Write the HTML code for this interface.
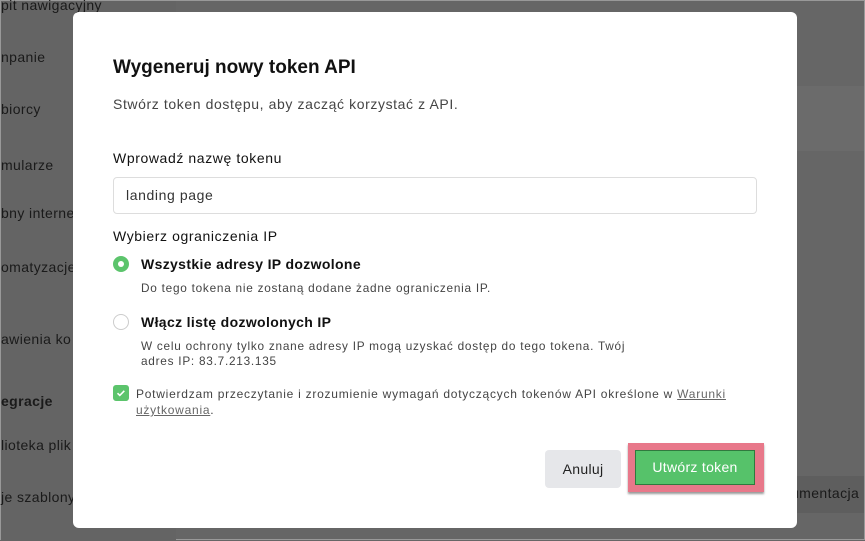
<!DOCTYPE html>
<html><head><meta charset="utf-8"><style>
*{margin:0;padding:0;box-sizing:border-box}
body{width:865px;height:540px;overflow:hidden;background:#666;font-family:"Liberation Sans",sans-serif;position:relative;border:1px solid #999}
.side{position:absolute;left:0;top:0;width:175px;height:540px;background:#646464}
.side div{position:absolute;left:0;font-size:14px;color:#1a1a1a;white-space:nowrap;letter-spacing:0.4px}
.band{position:absolute;left:175px;right:0;background:#6a6a6a}
.modal{position:absolute;left:72px;top:11px;width:724px;height:516px;background:#fff;border-radius:6px}
.abs{position:absolute;white-space:nowrap}
h1{position:absolute;left:40px;top:45px;font-size:19px;font-weight:600;color:#111}
.radio{position:absolute;width:16px;height:16px;border-radius:50%}
.t{letter-spacing:0.6px}
.s{letter-spacing:0.75px}
</style></head><body>
<div class="side">
<div style="top:-4px">pit nawigacyjny</div>
<div style="top:48px">npanie</div>
<div style="top:100px">biorcy</div>
<div style="top:156px">mularze</div>
<div style="top:204px">bny interne</div>
<div style="top:258px">omatyzacje</div>
<div style="top:330px">awienia ko</div>
<div style="top:392px;font-weight:bold">egracje</div>
<div style="top:436px">lioteka plik</div>
<div style="top:488px">je szablony</div>
</div>
<div class="band" style="top:85px;height:65px;background:#6b6b6b"></div>
<div class="band" style="top:475px;height:37px;background:#5e5e5e"></div>
<div class="abs" style="left:790px;top:484px;font-size:14px;color:#1a1a1a;letter-spacing:0.4px">umentacja</div>
<div class="modal">
<h1>Wygeneruj nowy token API</h1>
<div class="abs t" style="left:40px;top:84px;font-size:14px;color:#444">Stwórz token dostępu, aby zacząć korzystać z API.</div>
<div class="abs t" style="left:40px;top:138px;font-size:14px;color:#111">Wprowadź nazwę tokenu</div>
<div class="abs t" style="left:40px;top:165px;width:644px;height:37px;border:1px solid #ddd;border-radius:4px;padding:9px 12px;font-size:14px;color:#333">landing page</div>
<div class="abs t" style="left:40px;top:216px;font-size:14px;color:#111">Wybierz ograniczenia IP</div>
<div class="radio" style="left:40px;top:244px;background:#5cc46c"><div style="position:absolute;left:5px;top:5px;width:6px;height:6px;border-radius:50%;background:#fff"></div></div>
<div class="abs" style="left:68px;top:244px;font-size:14px;font-weight:600;color:#111;letter-spacing:0.35px">Wszystkie adresy IP dozwolone</div>
<div class="abs s" style="left:68px;top:269px;font-size:11.8px;color:#444">Do tego tokena nie zostaną dodane żadne ograniczenia IP.</div>
<div class="radio" style="left:40px;top:302px;border:1px solid #ccc"></div>
<div class="abs" style="left:68px;top:302px;font-size:14px;font-weight:600;color:#111;letter-spacing:0.35px">Włącz listę dozwolonych IP</div>
<div class="abs s" style="left:68px;top:327px;font-size:11.8px;color:#444;line-height:15px">W celu ochrony tylko znane adresy IP mogą uzyskać dostęp do tego tokena. Twój<br>adres IP: 83.7.213.135</div>
<div class="abs" style="left:40px;top:373px;width:16px;height:16px;border-radius:3px;background:#5cc46c"><svg width="16" height="16"><path d="M4.5 8.2l2.3 2.2 4.5-4.6" fill="none" stroke="#fff" stroke-width="1.6"/></svg></div>
<div class="abs s" style="left:63px;top:374px;font-size:12px;color:#444;line-height:16px">Potwierdzam przeczytanie i zrozumienie wymagań dotyczących tokenów API określone w <u style="color:#666">Warunki</u><br><u style="color:#666">użytkowania</u>.</div>
<div class="abs t" style="left:472px;top:438px;width:76px;height:38px;background:#e6e7ea;border-radius:4px;font-size:14px;color:#222;text-align:center;line-height:38px;letter-spacing:0.3px">Anuluj</div>
<div class="abs" style="left:555px;top:431px;width:136px;height:49px;background:#e8788a;box-shadow:0 2px 2px rgba(0,0,0,.4)"></div>
<div class="abs" style="left:562px;top:438px;width:120px;height:35px;background:#56c26a;border:1px solid #2f7a3e;font-size:14px;color:#fff;text-align:center;line-height:33px;letter-spacing:0.3px">Utwórz token</div>
</div>
</body></html>
